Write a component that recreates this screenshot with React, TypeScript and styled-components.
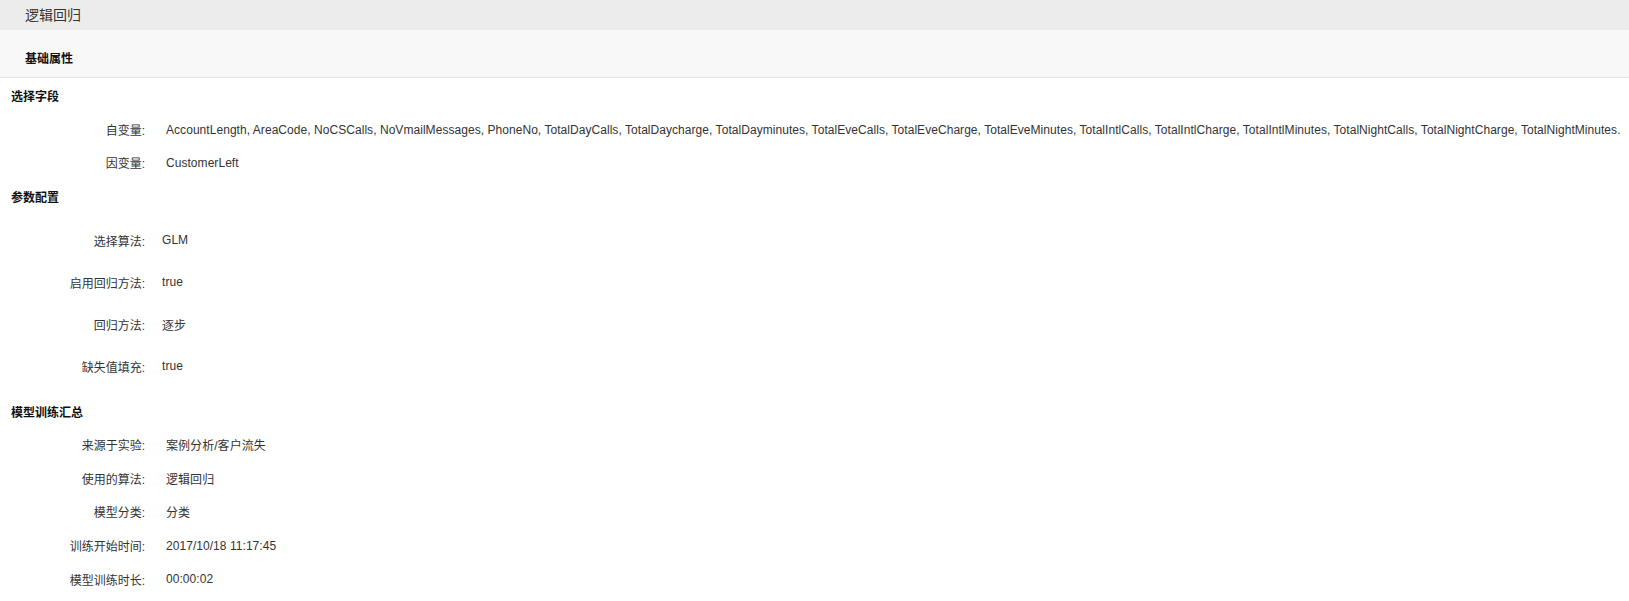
import React from 'react';
import styled, { createGlobalStyle } from 'styled-components';

const GlobalStyle = createGlobalStyle`
  html, body {
    margin: 0;
    padding: 0;
    background: #fff;
  }
  body {
    font-family: "Liberation Sans", Arial, "Noto Sans CJK SC", sans-serif;
    font-size: 12px;
    color: #333;
  }
`;

type Row = { label: string; value: string };

const fieldRows: Row[] = [
  {
    label: '自变量:',
    value:
      'AccountLength, AreaCode, NoCSCalls, NoVmailMessages, PhoneNo, TotalDayCalls, TotalDaycharge, TotalDayminutes, TotalEveCalls, TotalEveCharge, TotalEveMinutes, TotalIntlCalls, TotalIntlCharge, TotalIntlMinutes, TotalNightCalls, TotalNightCharge, TotalNightMinutes.'
  },
  { label: '因变量:', value: 'CustomerLeft' }
];

const paramRows: Row[] = [
  { label: '选择算法:', value: 'GLM' },
  { label: '启用回归方法:', value: 'true' },
  { label: '回归方法:', value: '逐步' },
  { label: '缺失值填充:', value: 'true' }
];

const summaryRows: Row[] = [
  { label: '来源于实验:', value: '案例分析/客户流失' },
  { label: '使用的算法:', value: '逻辑回归' },
  { label: '模型分类:', value: '分类' },
  { label: '训练开始时间:', value: '2017/10/18 11:17:45' },
  { label: '模型训练时长:', value: '00:00:02' }
];

type SectionProps = {
  title: string;
  rows: Row[];
  rowHeight: number;
  gap: number;
  top: number;
  listTop: number;
};

const Section: React.FC<SectionProps> = ({ title, rows, rowHeight, gap, top, listTop }) => (
  <SectionBox $top={top}>
    <SectionTitle>{title}</SectionTitle>
    <RowList $top={listTop}>
      {rows.map((r) => (
        <FieldRow key={r.label} $height={rowHeight}>
          <Label>{r.label}</Label>
          <Value $gap={gap}>{r.value}</Value>
        </FieldRow>
      ))}
    </RowList>
  </SectionBox>
);

const App: React.FC = () => (
  <>
    <GlobalStyle />
    <Page>
      <TitleBar>逻辑回归</TitleBar>
      <TabBar>
        <TabTitle>基础属性</TabTitle>
      </TabBar>
      <Body>
        <Section title="选择字段" rows={fieldRows} rowHeight={33} gap={21} top={3} listTop={0} />
        <Section title="参数配置" rows={paramRows} rowHeight={42} gap={17} top={3} listTop={5} />
        <Section title="模型训练汇总" rows={summaryRows} rowHeight={33.6} gap={21} top={10} listTop={-1} />
      </Body>
    </Page>
  </>
);

export default App;

const Page = styled.div`
  width: 100%;
  min-height: 601px;
  background: #fff;
`;

const TitleBar = styled.div`
  height: 30px;
  line-height: 30px;
  padding-left: 25px;
  background: #ececec;
  font-size: 14px;
  color: #333;
`;

const TabBar = styled.div`
  height: 48px;
  padding: 21px 0 0 25px;
  box-sizing: border-box;
  background: #f8f8f8;
  border-bottom: 1px solid #e3e3e3;
`;

const TabTitle = styled.div`
  line-height: 16px;
  font-size: 12px;
  font-weight: bold;
  color: #111;
`;

const Body = styled.div`
  display: flex;
  flex-direction: column;
`;

const SectionBox = styled.div<{ $top: number }>`
  display: flex;
  flex-direction: column;
  margin-top: ${({ $top }) => $top}px;
`;

const SectionTitle = styled.div`
  height: 32px;
  line-height: 32px;
  padding-left: 11px;
  font-size: 12px;
  font-weight: bold;
  color: #111;
`;

const RowList = styled.div<{ $top: number }>`
  display: flex;
  flex-direction: column;
  margin-top: ${({ $top }) => $top}px;
`;

const FieldRow = styled.div<{ $height: number }>`
  display: flex;
  align-items: center;
  height: ${({ $height }) => $height}px;
  white-space: nowrap;
`;

const Label = styled.div`
  width: 145px;
  flex-shrink: 0;
  text-align: right;
  font-size: 12px;
  color: #333;
`;

const Value = styled.div<{ $gap: number }>`
  padding-left: ${({ $gap }) => $gap}px;
  font-size: 12px;
  letter-spacing: 0.05px;
  color: #333;
`;
